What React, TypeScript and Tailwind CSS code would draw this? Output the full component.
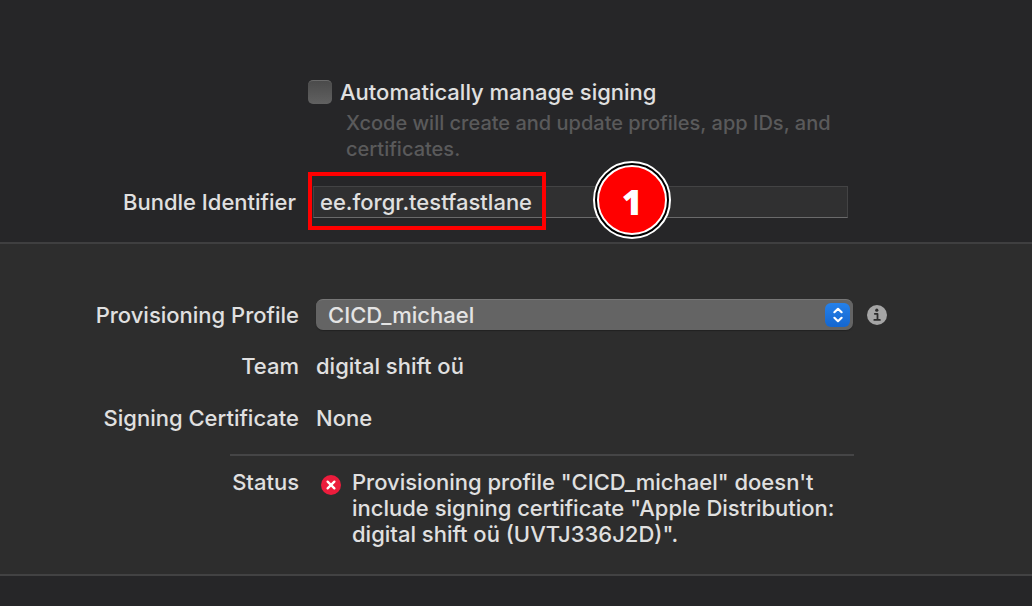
import React from "react";

function Row({ label, children }: { label: string; children: React.ReactNode }) {
  return (
    <div className="grid grid-cols-[299fr_733fr]">
      <span className="whitespace-nowrap text-right">{label}</span>
      <div className="flex min-w-0 pl-[17px]">{children}</div>
    </div>
  );
}

function Chevrons() {
  return (
    <svg viewBox="0 0 24 24" className="h-6 w-6" fill="none" stroke="white" strokeWidth="2.2" strokeLinecap="round" strokeLinejoin="round" aria-hidden="true">
      <path d="M8.4 9.2 12 5.8l3.6 3.4M8.4 14.8l3.6 3.4 3.6-3.4" />
    </svg>
  );
}

function InfoIcon() {
  return (
    <svg viewBox="0 0 20 20" className="h-5 w-5" aria-hidden="true">
      <circle cx="10" cy="10" r="10" fill="#a5a5a5" />
      <circle cx="9.8" cy="5.2" r="1.6" fill="#2d2d2d" />
      <path d="M7.8 8.8h2.7v5.8M7.3 14.9h5.6" fill="none" stroke="#2d2d2d" strokeWidth="1.8" strokeLinecap="round" strokeLinejoin="round" />
    </svg>
  );
}

function ErrorIcon() {
  return (
    <svg viewBox="0 0 20 20" className="mt-[6px] h-5 w-5 shrink-0" role="img" aria-label="Error">
      <circle cx="10" cy="10" r="10" fill="#ec1c3c" />
      <path d="m6.6 6.6 6.8 6.8M13.4 6.6l-6.8 6.8" stroke="white" strokeWidth="2.3" strokeLinecap="round" />
    </svg>
  );
}

export default function App() {
  return (
    <main className="flex min-h-screen flex-col bg-[#262628] font-['Inter',sans-serif] text-[22px] leading-[26px] font-medium text-[#e0e0e0]">
      <section className="border-b-2 border-[#3f3f40] pt-[79px] pb-3">
        <div className="grid grid-cols-[308fr_724fr]">
          <div className="col-start-2 flex items-center gap-2">
            <input
              id="auto"
              type="checkbox"
              className="h-6 w-6 appearance-none rounded-[5px] border-t border-[#6a6a6a] bg-linear-to-b from-[#4b4b4b] to-[#616161] checked:from-[#2e7de0] checked:to-[#1868d0]"
            />
            <label htmlFor="auto">Automatically manage signing</label>
          </div>
          <p className="col-start-2 mt-[5px] max-w-[550px] pl-[38px] text-[20px] text-[#5a5a5b]">
            Xcode will create and update profiles, app IDs, and certificates.
          </p>
        </div>
        <div className="mt-[10px] grid grid-cols-[308fr_540fr_184fr] items-center">
          <label htmlFor="bundle" className="whitespace-nowrap pt-px pr-3 text-right">Bundle Identifier</label>
          <div className="relative flex h-[58px] items-center pt-[2px] pl-[5px]">
            <input
              id="bundle"
              defaultValue="ee.forgr.testfastlane"
              className="h-8 w-full border border-[#434344] border-b-[#6a6a6b] bg-[#303031] px-[6px] outline-none"
            />
            <div className="pointer-events-none absolute inset-y-0 left-0 w-[238px] border-4 border-[#ff0000]" />
            <div className="absolute top-[-11px] left-[285px] flex h-[78px] w-[78px] items-center justify-center rounded-full border-2 border-white bg-black p-[2px]">
              <span className="flex h-full w-full items-center justify-center rounded-full border-2 border-white bg-[#ff0000] pt-[3px] font-['Open_Sans',sans-serif] text-[35px] font-extrabold text-white">
                1
              </span>
            </div>
          </div>
        </div>
      </section>

      <section className="border-b-2 border-[#424243] bg-[#2d2d2d] pt-[55px] pb-[27px]">
        <div className="grid grid-cols-[299fr_733fr] items-center">
          <label htmlFor="profile" className="whitespace-nowrap text-right">Provisioning Profile</label>
          <div className="flex items-center gap-[14px] pl-[17px]">
            <div className="relative w-3/4">
              <select
                id="profile"
                className="h-[31px] w-full appearance-none rounded-[7px] border-t border-[#777777] bg-[#646464] pr-9 pl-3 text-[22px] leading-[26px] text-[#e4e4e4] shadow-[0_1px_1px_#222222] outline-none"
              >
                <option>CICD_michael</option>
              </select>
              <span className="pointer-events-none absolute inset-y-0 right-[3px] flex items-center">
                <span className="flex h-6 w-[25px] items-center justify-center rounded-[6px] bg-linear-to-b from-[#2581ea] to-[#1466cf]">
                  <Chevrons />
                </span>
              </span>
            </div>
            <button type="button" aria-label="Signing information" className="rounded-full">
              <InfoIcon />
            </button>
          </div>
        </div>
        <div className="mt-[23px] flex flex-col gap-[26px]">
          <Row label="Team">digital shift oü</Row>
          <Row label="Signing Certificate">None</Row>
        </div>
        <div className="mt-[23px] mb-[13px] grid grid-cols-[230fr_624fr_178fr]">
          <hr className="col-start-2 border-t-2 border-[#454546]" />
        </div>
        <Row label="Status">
          <div className="flex gap-[11px] pl-[5px]">
            <ErrorIcon />
            <p className="max-w-[490px]">
              Provisioning profile "CICD_michael" doesn't include signing certificate "Apple Distribution: digital shift oü (UVTJ336J2D)".
            </p>
          </div>
        </Row>
      </section>
    </main>
  );
}
